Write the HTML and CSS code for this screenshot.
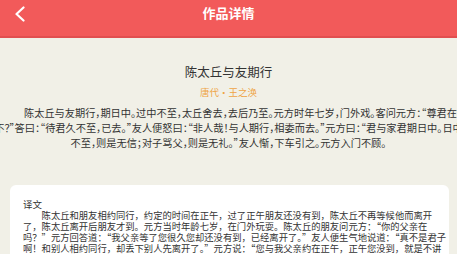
FILE: index.html
```html
<!DOCTYPE html>
<html>
<head>
    <meta charset="utf-8" />
    <title>作品详情</title>
    <link rel="stylesheet" href="styles.css">
</head>
<body>
    <div id="oldal">
        <div class="fejlec">
            <a class="vissza" href="#">
                <svg width="12" height="16" viewBox="0 0 12 16">
                    <polyline points="10.5,1.5 3.5,8 10.5,14.5" fill="none" stroke="#fff" stroke-width="2.2" stroke-linecap="round" stroke-linejoin="round" />
                </svg>
            </a>
            <div class="fejlec-cim">作品详情</div>
            <div></div>
        </div>

        <div class="vers">
            <h1 class="vers-cim">陈太丘与友期行</h1>
            <div class="vers-szerzo">唐代·王之涣</div>
            <p class="vers-szoveg">陈太丘与友期行，期日中。过中不至，太丘舍去，去后乃至。元方时年七岁，门外戏。客问元方：“尊君在<br>不？”答曰：“待君久不至，已去。”友人便怒曰：“非人哉！与人期行，相委而去。”元方曰：“君与家君期日中。日中<br>不至，则是无信；对子骂父，则是无礼。”友人惭，下车引之。元方入门不顾。</p>
        </div>

        <div class="kartya">
            <div class="kartya-cim">译文</div>
            <p class="kartya-szoveg">陈太丘和朋友相约同行，约定的时间在正午，过了正午朋友还没有到，陈太丘不再等候他而离开<br>了，陈太丘离开后朋友才到。元方当时年龄七岁，在门外玩耍。陈太丘的朋友问元方：“你的父亲在<br>吗？”元方回答道：“我父亲等了您很久您却还没有到，已经离开了。”友人便生气地说道：“真不是君子<br>啊！和别人相约同行，却丢下别人先离开了。”元方说：“您与我父亲约在正午，正午您没到，就是不讲<br>信用；对着人家儿子骂他的父亲，就是没有礼貌。”朋友感到惭愧，下车去拉元方的手。元方头也不回地<br>走进家门。</p>
        </div>
    </div>
</body>
</html>
```

FILE: styles.css
```css
html {
    overflow: hidden;
}
body {
    margin: 0;
    background-color: #f1f0e7;
    font-family: "Noto Sans CJK SC", "Noto Sans", sans-serif;
    color: #333;
}
.fejlec {
    display: grid;
    grid-template-columns: 1fr auto 1fr;
    height: 36px;
    background-color: #f25a5a;
    border-bottom: 2px solid #e14f50;
}
.vissza {
    display: block;
    width: 12px;
    height: 16px;
    margin: 6px 0 0 13px;
}
.vissza svg {
    display: block;
}
.fejlec-cim {
    padding-top: 5px;
    color: #fff;
    font-size: 13px;
    line-height: 16px;
    font-weight: bold;
}
.vers {
    padding-top: 26px;
    text-align: center;
}
.vers-cim {
    margin: 0;
    font-size: 12.5px;
    line-height: 16px;
    font-weight: normal;
    color: #333;
}
.vers-szerzo {
    margin-top: 5px;
    font-size: 9.5px;
    line-height: 14px;
    color: #efa444;
}
.vers-szoveg {
    margin: 6px -30px 0;
    font-size: 10.2px;
    line-height: 15px;
    white-space: nowrap;
    text-indent: 24px;
    font-feature-settings: "halt";
    color: #333;
}
.kartya {
    margin: 35px 8px 0 10px;
    padding: 14px 13px;
    background-color: #fff;
    border-radius: 6px;
}
.kartya-cim {
    font-size: 9.5px;
    line-height: 11px;
}
.kartya-szoveg {
    margin: 0;
    font-size: 9.3px;
    line-height: 11px;
    white-space: nowrap;
    text-indent: 2em;
    font-feature-settings: "chws";
}
```
